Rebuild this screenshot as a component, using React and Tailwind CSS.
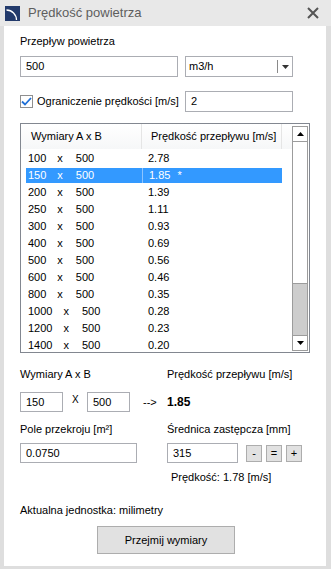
import React from "react";

const rows = [
  ["100", "500", "2.78"],
  ["150", "500", "1.85"],
  ["200", "500", "1.39"],
  ["250", "500", "1.11"],
  ["300", "500", "0.93"],
  ["400", "500", "0.69"],
  ["500", "500", "0.56"],
  ["600", "500", "0.46"],
  ["800", "500", "0.35"],
  ["1000", "500", "0.28"],
  ["1200", "500", "0.23"],
  ["1400", "500", "0.20"],
];

function Box({ className = "", children }) {
  return (
    <div className={`border border-[#abadb3] bg-white flex items-center pl-[5px] ${className}`}>
      {children}
    </div>
  );
}

function SmallBtn({ children }) {
  return (
    <div className="w-[16px] h-[17px] border border-[#adadad] bg-[#e1e1e1] flex items-center justify-center leading-none">
      {children}
    </div>
  );
}

function ScrollBar() {
  return (
    <div className="w-[17px] flex flex-col pt-[2px] pb-[1px] pr-[1px]">
      <div className="h-[16px] border border-[#9c9c9c] bg-white flex items-center justify-center">
        <svg width="7" height="4" viewBox="0 0 7 4"><path d="M3.5 0 L7 4 L0 4 Z" fill="#000" /></svg>
      </div>
      <div className="flex-1 flex flex-col border-x border-[#9c9c9c]">
        <div className="h-[142px] bg-white border-b border-[#9c9c9c]" />
        <div className="flex-1 bg-[#cdcdcd]" />
      </div>
      <div className="h-[16px] border border-[#9c9c9c] bg-white flex items-center justify-center">
        <svg width="7" height="4" viewBox="0 0 7 4"><path d="M0 0 L7 0 L3.5 4 Z" fill="#000" /></svg>
      </div>
    </div>
  );
}

export default function App() {
  return (
    <div className="w-[331px] h-[569px] bg-[#dedede] flex flex-col font-['Liberation_Sans',Arial,sans-serif] text-[11px] text-black">
      {/* title bar */}
      <div className="h-[26px] bg-[#e8e8e8] flex items-center pl-[5px] pr-[12px]">
        <svg width="15" height="15" viewBox="0 0 15 15">
          <rect width="15" height="15" fill="#223a6b" />
          <path d="M1.5 4 A10 10 0 0 1 11.5 14" stroke="#fff" strokeWidth="1.3" fill="none" />
        </svg>
        <span className="ml-[8px] text-[13px] text-[#5e5e5e]">Prędkość powietrza</span>
        <svg className="ml-auto" width="12" height="12" viewBox="0 0 12 12">
          <path d="M1 1 L11 11 M11 1 L1 11" stroke="#555" strokeWidth="2" />
        </svg>
      </div>

      {/* body */}
      <div className="flex-1 ml-[4px] mr-[5px] mb-[3px] bg-white pl-[16px] pt-[9px] flex flex-col">
        <div className="h-[13px] leading-[13px]">Przepływ powietrza</div>

        <div className="mt-[8px] flex h-[21px]">
          <Box className="w-[158px] h-[21px]">500</Box>
          <div className="ml-[7px] w-[108px] h-[21px] border border-[#abadb3] bg-white flex items-center pl-[3px]">
            <span>m3/h</span>
            <div className="ml-auto h-[13px] border-l border-[#8a8a8a] w-[15px] flex items-center justify-center">
              <svg width="7" height="4" viewBox="0 0 7 4"><path d="M0 0 L7 0 L3.5 4 Z" fill="#333" /></svg>
            </div>
          </div>
        </div>

        <div className="mt-[14px] flex items-center h-[21px]">
          <div className="w-[13px] h-[13px] border border-[#8f8f8f] bg-white flex items-center justify-center">
            <svg width="11" height="9" viewBox="0 0 11 9">
              <path d="M1 4.5 L4 7.5 L10 1" stroke="#1f6fd6" strokeWidth="1.8" fill="none" />
            </svg>
          </div>
          <span className="ml-[4px] w-[148px]">Ograniczenie prędkości [m/s]</span>
          <Box className="w-[108px] h-[21px]">2</Box>
        </div>

        {/* list */}
        <div className="mt-[11px] w-[290px] h-[230px] border border-[#828790] flex overflow-hidden">
          <div className="flex-1 flex flex-col">
            <div className="h-[25px] shrink-0 flex bg-gradient-to-b from-white to-[#f6f7f8]">
              <div className="w-[121px] border-r border-[#e5e5e5] flex items-center pl-[10px]">Wymiary A x B</div>
              <div className="w-[140px] border-r border-[#e5e5e5] flex items-center pl-[9px]">Prędkość przepływu [m/s]</div>
            </div>
            <div className="pl-[5px] pt-[1px]">
              {rows.map(([a, b, v], i) => {
                const sel = i === 1;
                return (
                  <div key={i} className="h-[17px] flex items-center">
                    <div className={`w-[116px] h-[15px] flex items-center pl-[2px] ${sel ? "bg-[#3399ff] text-white" : ""}`}>
                      <span>{a}</span>
                      <span className="ml-[11px]">x</span>
                      <span className="ml-[13px]">{b}</span>
                    </div>
                    <div className={`w-[140px] h-[15px] flex items-center pl-[6px] ${sel ? "bg-[#3399ff] text-white border-l border-[#8cc4ff]" : ""}`}>
                      <span>{v}</span>
                      {sel && <span className="ml-[7px]">*</span>}
                    </div>
                  </div>
                );
              })}
            </div>
          </div>
          <ScrollBar />
        </div>

        {/* lower section */}
        <div className="mt-[15px] h-[13px] flex leading-[13px]">
          <span className="w-[147px]">Wymiary A x B</span>
          <span>Prędkość przepływu [m/s]</span>
        </div>

        <div className="mt-[11px] flex items-center h-[20px]">
          <Box className="w-[43px] h-[20px]">150</Box>
          <span className="ml-[9px] mb-[5px] w-[15px] text-[10px]">X</span>
          <Box className="w-[43px] h-[20px]">500</Box>
          <span className="ml-[13px] w-[24px]">--&gt;</span>
          <span className="font-bold text-[12px]">1.85</span>
        </div>

        <div className="mt-[11px] h-[13px] flex leading-[13px]">
          <span className="w-[147px]">Pole przekroju [m²]</span>
          <span>Średnica zastępcza [mm]</span>
        </div>

        <div className="mt-[7px] flex items-center h-[20px]">
          <Box className="w-[117px] h-[20px]">0.0750</Box>
          <div className="ml-[30px] flex items-center gap-[4px]">
            <Box className="w-[71px] h-[20px] mr-[4px]">315</Box>
            <SmallBtn>-</SmallBtn>
            <SmallBtn>=</SmallBtn>
            <SmallBtn>+</SmallBtn>
          </div>
        </div>

        <div className="mt-[8px] h-[13px] leading-[13px] pl-[151px]">Prędkość: 1.78 [m/s]</div>

        <div className="mt-[20px] h-[13px] leading-[13px]">Aktualna jednostka: milimetry</div>

        <div className="mt-[9px] ml-[77px] w-[138px] h-[28px] border border-[#adadad] bg-[#e1e1e1] flex items-center justify-center">
          Przejmij wymiary
        </div>
      </div>
    </div>
  );
}
